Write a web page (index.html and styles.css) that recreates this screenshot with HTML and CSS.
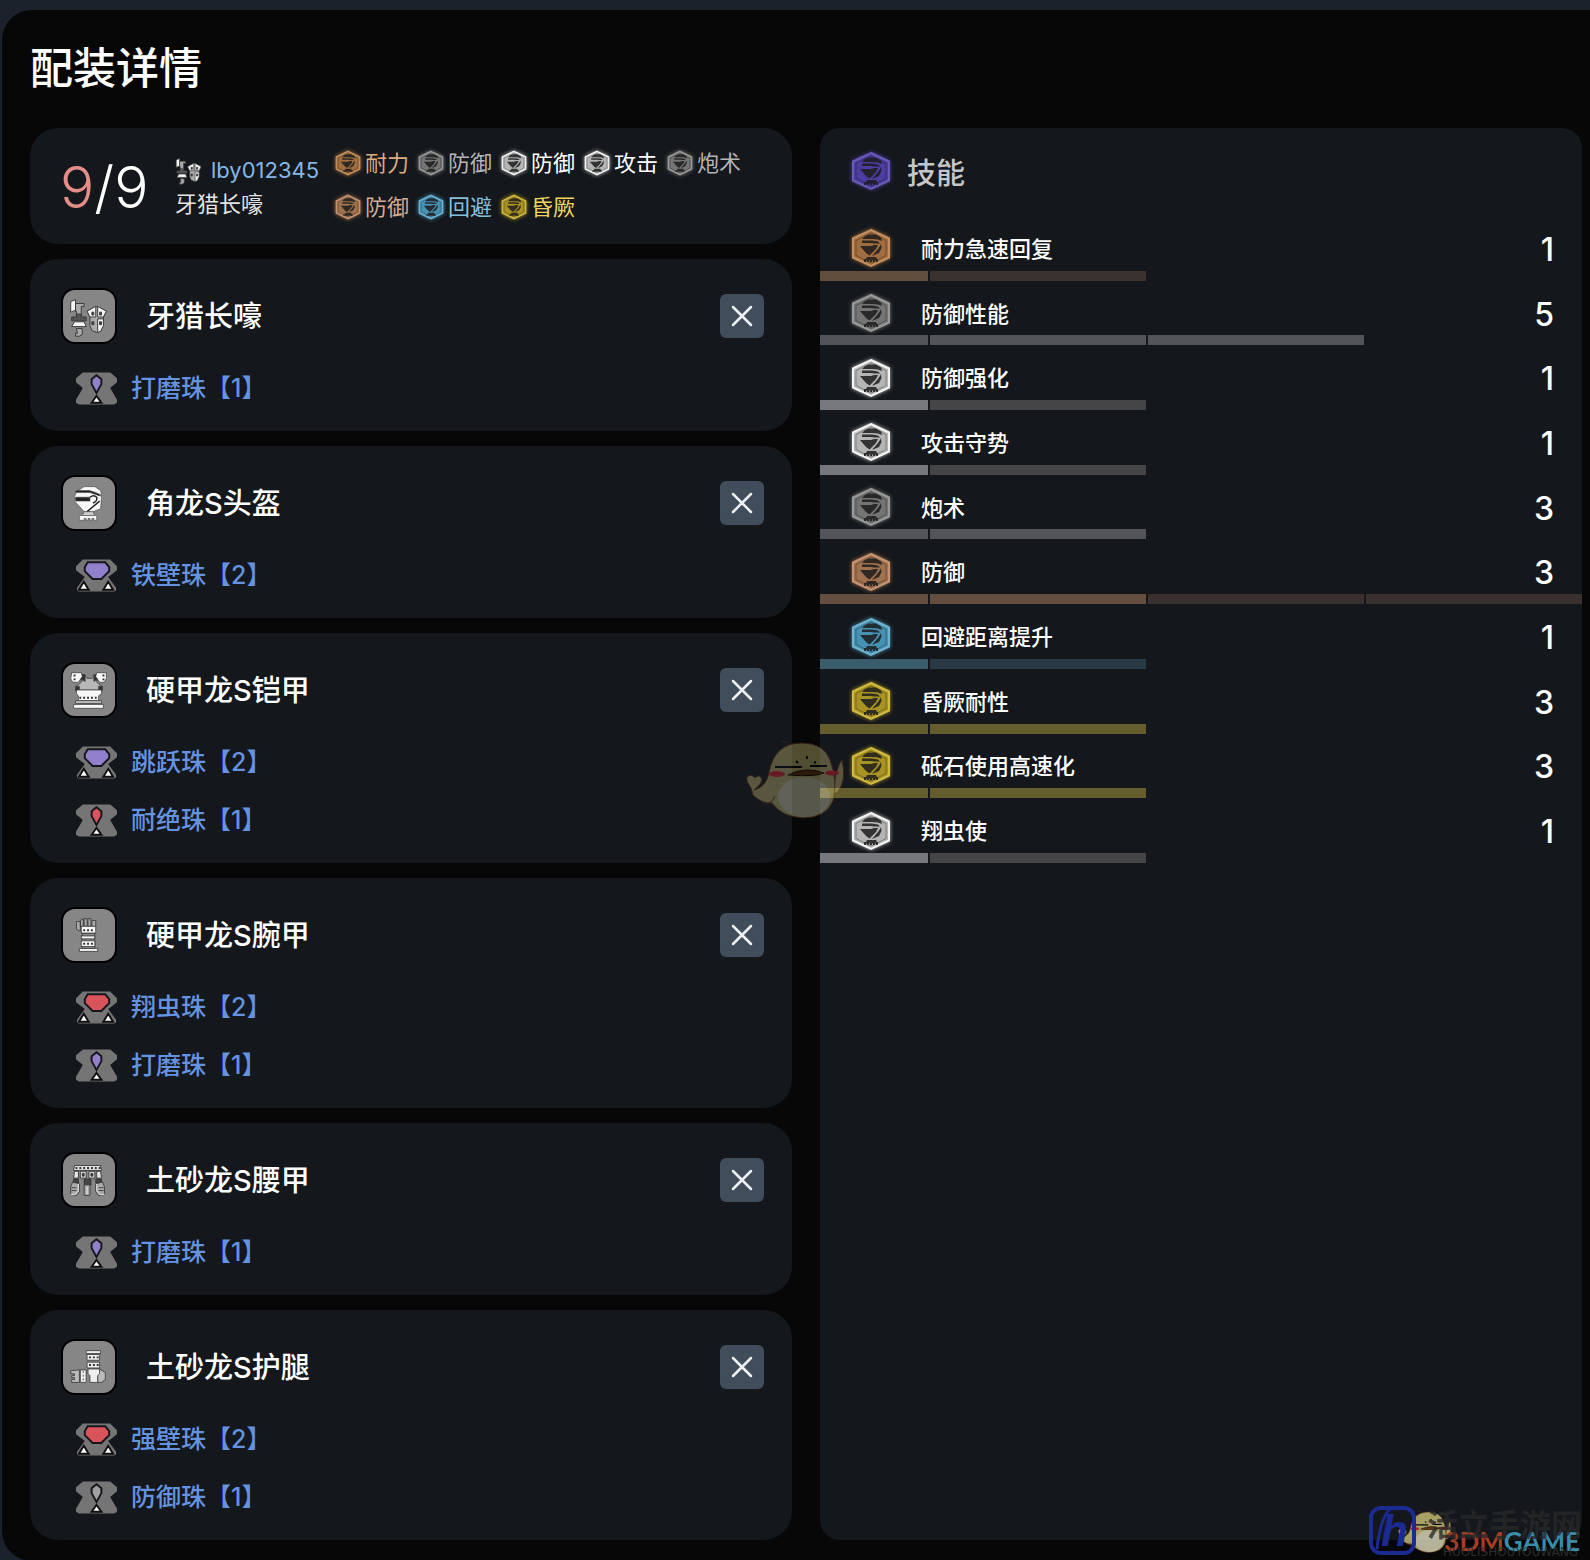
FILE: index.html
```html
<!DOCTYPE html>
<html lang="zh-CN">
<head>
  <meta charset="UTF-8">
  <meta name="viewport" content="width=device-width, initial-scale=1.0">
  <title>配装详情</title>
  <link rel="stylesheet" href="styles.css">
</head>
<body>

  <!-- Shared icons -->
  <svg class="sprite" aria-hidden="true">
    <symbol id="skill" viewBox="0 0 40 40">
      <polygon class="hex" points="20,2 38,10.500 38,29.500 20,38 2,29.500 2,10.500" />
      <polygon class="hex-line" points="20,5 35,12.500 35,27.500 20,35 5,27.500 5,12.500" />
      <g class="hex-art">
        <path d="M11 11L14 8L18 6.500H25L30 9.500L31 13L27 11.500L21 11Z" />
        <path d="M11 12.500H21L27 13.500L29 15.500H23L20 15H11Z" />
        <path d="M9 18H20L23 17H27L25 21L18.500 27.500L15 25Z" />
        <path d="M30 16L30.500 20L28 25L21 28L27 21L29 18Z" />
        <path d="M16 29H25L26 31H27V34H25V32.500H24V34H22V32.500H21V34H19V32.500H18V34H16V32.500H15V34H13V31H15Z" />
      </g>
    </symbol>
    <symbol id="weapon" viewBox="0 0 54 54">
      <g stroke="#3a3a3a" stroke-width="1">
        <path fill="#f4f4f4" d="M8 12L13 10V21L8 23Z" />
        <path fill="#aaa" d="M13 14H22V17H19V27H14V22H13Z" />
        <path fill="#555" d="M9 28H14V25H19V28H24V32H9Z" />
        <path fill="#f4f4f4" d="M12 33H22L24 38H9Z" />
        <path fill="#aaa" d="M14 40H20V46L17 48H13V45H15Z" />
        <path fill="#aaa" d="M25 22L35 17L45 22L42 28V37L39 43L35 44L30 42L28 37V28Z" />
        <path fill="#f4f4f4" d="M25 22L34 17V28H28ZM36 17L45 22L42 28H36ZM36 30H42V37L39 43L36 44Z" />
        <path fill="#444" d="M30 23H32V26H30ZM38 23H40V26H38ZM30 33H32V36H30ZM38 33H40V36H38Z" />
      </g>
    </symbol>
    <symbol id="head" viewBox="0 0 54 54">
      <g fill="#f8f8f8" stroke="#444" stroke-width=".6">
        <path d="M14 15L22 10H33L39 14L40 19L34 16L27 14H14Z" />
        <path d="M12 20L14 16H27L34 18L40 20L39 33L31 36L26 36H22L12 25Z" />
        <path fill="#222" d="M13 21H28V25H13Z" />
        <path fill="none" stroke="#222" stroke-width="1.500" d="M28 21Q32 18 35 21Q36 25 31 27M38 25L25 36M13 15H28L38 19" />
        <path fill="#ccc" d="M22 36H31L33 40H20Z" />
        <path d="M17 40H35V45H32V43H30V45H28V43H26V45H24V43H22V45H17Z" />
      </g>
    </symbol>
    <symbol id="chest" viewBox="0 0 54 54">
      <g fill="#f8f8f8" stroke="#444" stroke-width=".8">
        <path fill="#b8b8b8" d="M19 13H23L25 15H30L32 13H36L35 19L40 23V27H14V23L19 19Z" />
        <path fill="#333" d="M18 11H23V18L18 16ZM32 11H37V16L32 18ZM13 23H17V28H13ZM37 23H41V28H37Z" />
        <path d="M9 9H19L20 13L16 19H10L8 15ZM35 9H45V15L43 19H38L34 13Z" />
        <path fill="#333" stroke="none" d="M11 11H13V13H11ZM11 15H13V17H11ZM41 11H43V13H41ZM41 15H43V17H41Z" />
        <path d="M14 27H40V31L37 33V38H16V33L14 31Z" />
        <path stroke="#333" stroke-width="2" stroke-dasharray="2 2" d="M17 35H37" />
        <path fill="#bbb" d="M13 38H40V41H13Z" />
        <path d="M11 42H42V46H11Z" />
      </g>
    </symbol>
    <symbol id="arm" viewBox="0 0 54 54">
      <g fill="#f8f8f8" stroke="#333" stroke-width=".8">
        <path fill="#aaa" d="M14 13H18V23L14 21ZM18 12L21 10V18H18ZM22 10H25V18H22ZM26 10H29V18H26ZM30 12H34V18H30Z" />
        <path fill="#888" d="M20 25H33V41H20Z" />
        <path d="M19 18H34V25H19ZM19 28H33V31H19ZM19 33H33V39H19ZM17 41H36V44H17Z" />
        <path stroke="#333" stroke-width="2" stroke-dasharray="2 2" d="M21 22H33M21 36H32" />
      </g>
    </symbol>
    <symbol id="waist" viewBox="0 0 54 54">
      <g fill="#e8e8e8" stroke="#333" stroke-width=".9">
        <path d="M12 12H39L40 17H11ZM12 18H16V25H11ZM18 18H24V25H18ZM27 18H33V25H27ZM35 18H39L40 25H35Z" />
        <path stroke-width="2" stroke-dasharray="2 2" d="M13 14.500H39" />
        <path fill="#444" d="M20 20H22V23H20ZM29 20H31V23H29ZM11 26H16V30H11ZM22 26H29V32H22ZM34 26H40V30H34Z" />
        <path fill="#aaa" d="M10 29L17 31V39L14 43L8 42V34ZM22 32H28V43H22ZM34 31L41 29L43 34V42L37 43L34 39Z" />
        <path fill="none" stroke="#f0f0f0" d="M16 31V38L13 42H8M25 34V42M35 31V38L38 42H43" />
        <path fill="none" d="M9 35H14M9 38H14M37 35H42M37 38H42" />
      </g>
    </symbol>
    <symbol id="leg" viewBox="0 0 54 54">
      <g fill="#eee" stroke="#333" stroke-width=".8">
        <path d="M24 10H39V13H24ZM25 14H38V20H25ZM25 22H38V28H25Z" />
        <path stroke-width="2" stroke-dasharray="2 2" d="M27 17H37M27 25H37" />
        <path fill="#bbb" d="M8 31L17 30V43H9V40H12V38H9V36H12V34H8ZM38 29L44 33V40L40 43H36V36Z" />
        <path d="M18 30H24V43H18ZM26 29H38V34L36 36V43H28V36L26 34Z" />
        <path fill="none" stroke-dasharray="2 2" d="M21 31V43" />
      </g>
    </symbol>
    <symbol id="slot1" viewBox="0 0 42 34">
      <path fill="#757575" d="M7 0H35L42 6V10L35 16L42 28V31L39 33H3L0 31V28L7 16L0 10V6Z" />
      <path class="gem" d="M21 3L16 7V12L21 21L26 12V7Z" />
      <path class="slot-mark" d="M21 24L26 31H16Z" />
    </symbol>
    <symbol id="slot2" viewBox="0 0 42 34">
      <path fill="#757575" d="M7 0H35L42 7V11L33 18L41 29V32L39 33H3L1 32V29L9 18L0 11V7Z" />
      <path class="gem" d="M12 3H30L34 8V12L26 20H17L9 12V8Z" />
      <path class="slot-mark" d="M8 23L13 31H3ZM33 23L38 31H28Z" />
    </symbol>
    <symbol id="close" viewBox="0 0 24 24">
      <path d="M3 3L21 21M21 3L3 21" fill="none" stroke="#eef1f5" stroke-width="2.500" stroke-linecap="round" />
    </symbol>
    <symbol id="bird" viewBox="0 0 100 82">
      <g fill="#d8cf7e" stroke="#7a3a1c" stroke-width="1">
        <path d="M87 52Q90 26 96 19Q101 40 91 52Z" />
        <path d="M56 2Q78 2 84 19Q92 40 87 60Q80 77 57 77Q36 76 26 62Q16 63 7 54L5 47Q0 40 1 36Q5 32 9 37Q14 32 16 39Q15 44 8 49Q20 46 23 32Q28 2 56 2Z" />
        <path fill="none" d="M42 2L36 0M8 49L13 44M16 62Q26 64 29 55" />
      </g>
      <ellipse cx="58" cy="56" rx="26" ry="20" fill="#fff" opacity=".6" />
      <ellipse cx="31" cy="33" rx="8" ry="3" fill="#ff2035" />
      <ellipse cx="86" cy="32" rx="7" ry="2.500" fill="#ff2035" />
      <path fill="#7a3c10" stroke="#1a0a00" d="M42 34Q60 25 78 32Q70 36 42 34Z" />
      <path stroke="#000" stroke-width="2" d="M29 26H56M64 25H81" />
      <path stroke="#000" stroke-width="2" d="M50 20L52 22M61 15V18M70 21L68 22" />
    </symbol>
  </svg>

  <main class="modal">
    <h1 class="title">配装详情</h1>

    <div class="columns">
      <!-- Equipment -->
      <section class="equipment">
        <div class="card summary">
          <div class="score"><span>9</span>/9</div>
          <div class="player">
            <div class="player-name"><svg class="icon-player"><use href="#weapon" /></svg><a href="#">lby012345</a></div>
            <p>牙猎长嚎</p>
          </div>
          <ul class="tags">
            <li class="orange"><svg><use href="#skill" /></svg>耐力</li>
            <li class="gray"><svg><use href="#skill" /></svg>防御</li>
            <li class="white"><svg><use href="#skill" /></svg>防御</li>
            <li class="white"><svg><use href="#skill" /></svg>攻击</li>
            <li class="gray"><svg><use href="#skill" /></svg>炮术</li>
            <li class="brown"><svg><use href="#skill" /></svg>防御</li>
            <li class="blue"><svg><use href="#skill" /></svg>回避</li>
            <li class="yellow"><svg><use href="#skill" /></svg>昏厥</li>
          </ul>
        </div>

        <article class="card item">
          <div class="item-head">
            <svg class="icon-item"><use href="#weapon" /></svg>
            <h2>牙猎长嚎</h2>
            <button class="btn-close" type="button" aria-label="移除"><svg><use href="#close" /></svg></button>
          </div>
          <a class="jewel purple" href="#"><svg><use href="#slot1" /></svg><span>打磨珠【1】</span></a>
        </article>

        <article class="card item">
          <div class="item-head">
            <svg class="icon-item"><use href="#head" /></svg>
            <h2>角龙S头盔</h2>
            <button class="btn-close" type="button" aria-label="移除"><svg><use href="#close" /></svg></button>
          </div>
          <a class="jewel purple" href="#"><svg><use href="#slot2" /></svg><span>铁壁珠【2】</span></a>
        </article>

        <article class="card item">
          <div class="item-head">
            <svg class="icon-item"><use href="#chest" /></svg>
            <h2>硬甲龙S铠甲</h2>
            <button class="btn-close" type="button" aria-label="移除"><svg><use href="#close" /></svg></button>
          </div>
          <a class="jewel purple" href="#"><svg><use href="#slot2" /></svg><span>跳跃珠【2】</span></a>
          <a class="jewel red" href="#"><svg><use href="#slot1" /></svg><span>耐绝珠【1】</span></a>
        </article>

        <article class="card item">
          <div class="item-head">
            <svg class="icon-item"><use href="#arm" /></svg>
            <h2>硬甲龙S腕甲</h2>
            <button class="btn-close" type="button" aria-label="移除"><svg><use href="#close" /></svg></button>
          </div>
          <a class="jewel red" href="#"><svg><use href="#slot2" /></svg><span>翔虫珠【2】</span></a>
          <a class="jewel purple" href="#"><svg><use href="#slot1" /></svg><span>打磨珠【1】</span></a>
        </article>

        <article class="card item">
          <div class="item-head">
            <svg class="icon-item"><use href="#waist" /></svg>
            <h2>土砂龙S腰甲</h2>
            <button class="btn-close" type="button" aria-label="移除"><svg><use href="#close" /></svg></button>
          </div>
          <a class="jewel purple" href="#"><svg><use href="#slot1" /></svg><span>打磨珠【1】</span></a>
        </article>

        <article class="card item">
          <div class="item-head">
            <svg class="icon-item"><use href="#leg" /></svg>
            <h2>土砂龙S护腿</h2>
            <button class="btn-close" type="button" aria-label="移除"><svg><use href="#close" /></svg></button>
          </div>
          <a class="jewel red" href="#"><svg><use href="#slot2" /></svg><span>强壁珠【2】</span></a>
          <a class="jewel plain" href="#"><svg><use href="#slot1" /></svg><span>防御珠【1】</span></a>
        </article>
      </section>

      <!-- Skills -->
      <section class="skills">
        <h2 class="skills-title purple-hex"><svg><use href="#skill" /></svg>技能</h2>
        <ul class="skill-list">
          <li class="skill orange">
            <div class="skill-row"><svg><use href="#skill" /></svg><span>耐力急速回复</span><b>1</b></div>
            <div class="bar"><i class="on"></i><i></i></div>
          </li>
          <li class="skill gray">
            <div class="skill-row"><svg><use href="#skill" /></svg><span>防御性能</span><b>5</b></div>
            <div class="bar"><i class="on"></i><i class="on"></i><i class="on"></i></div>
          </li>
          <li class="skill white">
            <div class="skill-row"><svg><use href="#skill" /></svg><span>防御强化</span><b>1</b></div>
            <div class="bar"><i class="on"></i><i></i></div>
          </li>
          <li class="skill white">
            <div class="skill-row"><svg><use href="#skill" /></svg><span>攻击守势</span><b>1</b></div>
            <div class="bar"><i class="on"></i><i></i></div>
          </li>
          <li class="skill gray">
            <div class="skill-row"><svg><use href="#skill" /></svg><span>炮术</span><b>3</b></div>
            <div class="bar"><i class="on"></i><i class="on"></i></div>
          </li>
          <li class="skill brown">
            <div class="skill-row"><svg><use href="#skill" /></svg><span>防御</span><b>3</b></div>
            <div class="bar"><i class="on"></i><i class="on"></i><i></i><i></i></div>
          </li>
          <li class="skill blue">
            <div class="skill-row"><svg><use href="#skill" /></svg><span>回避距离提升</span><b>1</b></div>
            <div class="bar"><i class="on"></i><i></i></div>
          </li>
          <li class="skill yellow">
            <div class="skill-row"><svg><use href="#skill" /></svg><span>昏厥耐性</span><b>3</b></div>
            <div class="bar"><i class="on"></i><i class="on"></i></div>
          </li>
          <li class="skill yellow">
            <div class="skill-row"><svg><use href="#skill" /></svg><span>砥石使用高速化</span><b>3</b></div>
            <div class="bar"><i class="on"></i><i class="on"></i></div>
          </li>
          <li class="skill white">
            <div class="skill-row"><svg><use href="#skill" /></svg><span>翔虫使</span><b>1</b></div>
            <div class="bar"><i class="on"></i><i></i></div>
          </li>
        </ul>
      </section>
    </div>

    <!-- Watermarks -->
    <svg class="bird-mark"><use href="#bird" /></svg>
    <div class="site-mark">
      <svg class="site-bird"><use href="#bird" /></svg>
      <span class="site-game"><em>3DM</em>GAME</span>
      <span class="site-name">活立手游网</span>
      <span class="site-pinyin">HUOLISHOUYOUWANG</span>
      <svg class="site-logo" viewBox="0 0 50 52">
        <rect x="3" y="3" width="43" height="45" rx="10" fill="none" stroke="#1b2b92" stroke-width="4" />
        <path d="M22 4Q12 14 9 44" fill="none" stroke="#1b2b92" stroke-width="3" />
        <text x="13" y="41" class="site-letter">h</text>
      </svg>
    </div>
  </main>

</body>
</html>
```
FILE: styles.css
```css
* {
  margin: 0;
  padding: 0;
  box-sizing: border-box;
}

body {
  font-family: Inter, "Noto Sans CJK SC", sans-serif;
  background-color: #1b222b;
  color: #fff;
}

ul {
  list-style: none;
}

a {
  text-decoration: none;
}

.sprite {
  position: absolute;
  width: 0;
  height: 0;
}

.modal {
  position: relative;
  margin: 10px 0 0 2px;
  padding: 28px 8px 21px 28px;
  background-color: #070707;
  border-radius: 30px 0 0 30px;
}

.title {
  margin-bottom: 30px;
  font-size: 43px;
  font-weight: 500;
  line-height: 60px;
}

.columns {
  display: flex;
  gap: 28px;
}

/* Left column */
.equipment {
  flex: 1;
  display: flex;
  flex-direction: column;
  gap: 15px;
}

.card {
  background-color: #14171b;
  border-radius: 28px;
}

.summary {
  display: flex;
  align-items: center;
  min-height: 116px;
  padding: 0 30px;
}

.score {
  width: 115px;
  padding-top: 4px;
  font-size: 57px;
  font-weight: 300;
  line-height: 72px;
}

.score span {
  color: #e58d88;
}

.player {
  width: 160px;
  padding-top: 2px;
  font-size: 22px;
  line-height: 34px;
  color: #e4e4e4;
}

.player-name {
  display: flex;
  align-items: center;
  gap: 8px;
}

.player-name a {
  color: #84b7e8;
}

.icon-player {
  width: 28px;
  height: 28px;
  transform: scale(1.3);
}

.tags {
  flex: 1;
  display: flex;
  flex-wrap: wrap;
  column-gap: 9px;
  padding-bottom: 3px;
}

.tags li {
  display: flex;
  align-items: center;
  gap: 4px;
  font-size: 22px;
  line-height: 44px;
  color: var(--text);
}

.tags svg {
  width: 26px;
  height: 26px;
}

.item {
  display: flex;
  flex-direction: column;
  padding: 28px 28px 13px 31px;
}

.item-head {
  display: flex;
  align-items: center;
  height: 58px;
  margin-bottom: 15px;
}

.icon-item {
  width: 56px;
  height: 56px;
  border: 2px solid #000;
  border-radius: 14px;
  background-color: #868686;
}

.item h2 {
  flex: 1;
  margin-left: 29px;
  padding-bottom: 4px;
  font-size: 29px;
  font-weight: 500;
}

.btn-close {
  display: flex;
  align-items: center;
  justify-content: center;
  width: 44px;
  height: 44px;
  border: none;
  border-radius: 6px;
  background-color: #414d5b;
  cursor: pointer;
}

.btn-close svg {
  width: 24px;
  height: 24px;
}

.jewel {
  display: flex;
  align-items: center;
  gap: 14px;
  height: 58px;
  margin-left: 15px;
  font-size: 25px;
  font-weight: 500;
  color: #6593e0;
}

.jewel span {
  padding-bottom: 7px;
}

.jewel svg {
  width: 41px;
  height: 34px;
}

.gem {
  fill: var(--gem);
  stroke: #16161c;
  stroke-width: 2;
}

.slot-mark {
  fill: #fff;
  stroke: #111;
  stroke-width: 2;
}

.purple {
  --gem: #9181cc;
}

.red {
  --gem: #d9545a;
}

.plain {
  --gem: #a0a0a0;
}

/* Right column */
.skills {
  flex: 1;
  background-color: #14171b;
  border-radius: 20px;
}

.skills-title {
  display: flex;
  align-items: center;
  gap: 16px;
  height: 88px;
  padding: 0 0 3px 31px;
  font-size: 29px;
  font-weight: 500;
  color: #c6c6c6;
}

.skills-title svg,
.skill svg {
  width: 40px;
  height: 40px;
}

/* ten rows share the height evenly */
.skill-list {
  display: grid;
  grid-auto-rows: 1fr;
  min-height: 647px;
}

.skill {
  display: flex;
  flex-direction: column;
}

.skill-row {
  flex: 1;
  display: flex;
  align-items: center;
  padding: 10px 28px 0 31px;
  font-size: 22px;
  font-weight: 500;
}

.skill-row span {
  flex: 1;
  margin-left: 30px;
  padding-bottom: 3px;
}

.skill-row b {
  padding-top: 2px;
  font-size: 32px;
  font-weight: 500;
}

.bar {
  display: grid;
  grid-template-columns: 1fr 2fr 2fr 2fr;
  gap: 2px;
  height: 10px;
}

.bar i {
  background-color: var(--off);
}

.bar .on {
  background-color: var(--on);
}

/* Skill icon */
.hex {
  fill: var(--hex);
  stroke: var(--edge);
  stroke-width: 2;
}

.hex-line {
  fill: none;
  stroke: #000;
  stroke-opacity: 0.3;
  stroke-width: 1;
}

.hex-art {
  fill: #1c1c1c;
  fill-opacity: 0.85;
}

.tags svg,
.skills-title svg,
.skill svg {
  filter: drop-shadow(0 0 2px var(--hex));
}

.orange {
  --hex: #a06e40;
  --edge: #c48e5e;
  --text: #d9ac84;
  --on: #614e3d;
  --off: #3a322e;
}

.brown {
  --hex: #a0714e;
  --edge: #c49474;
  --text: #d3ab90;
  --on: #634e3f;
  --off: #3a312f;
}

.gray {
  --hex: #757575;
  --edge: #999;
  --text: #b4b4b4;
  --on: #535458;
  --off: #38393c;
}

.white {
  --hex: #b5b5b5;
  --edge: #f4f4f4;
  --text: #fff;
  --on: #77787b;
  --off: #454548;
}

.blue {
  --hex: #4791b3;
  --edge: #72b4d0;
  --text: #85c0da;
  --on: #395b6c;
  --off: #283945;
}

.yellow {
  --hex: #a89324;
  --edge: #d0ba42;
  --text: #f0d45c;
  --on: #655d2d;
  --off: #3a3722;
}

.purple-hex {
  --hex: #4d3da0;
  --edge: #6a5ab8;
}

.purple-hex .hex-art {
  fill: #17103c;
}

/* Watermarks */
.bird-mark {
  position: absolute;
  left: 744px;
  top: 731px;
  width: 100px;
  height: 82px;
  opacity: 0.35;
}

.site-mark {
  position: absolute;
  right: 8px;
  bottom: 0;
  width: 214px;
  height: 56px;
}

.site-mark > * {
  position: absolute;
  white-space: nowrap;
}

.site-logo {
  left: 0;
  top: 0;
  width: 50px;
  height: 52px;
}

.site-letter {
  font: italic bold 44px "Liberation Sans", sans-serif;
  fill: #1b2b92;
}

.site-bird {
  left: 30px;
  top: 4px;
  width: 54px;
  height: 48px;
  opacity: 0.75;
}

.site-game {
  right: 2px;
  top: 18px;
  font: bold 26px/36px Lato, sans-serif;
  color: #3a8cab;
}

.site-game em {
  font-style: normal;
  color: #a33f26;
}

.site-name {
  right: 0;
  top: 0;
  font: bold 31px/36px "Noto Sans CJK SC", sans-serif;
  color: rgba(40, 40, 42, 0.8);
}

.site-pinyin {
  right: 4px;
  top: 40px;
  font: 12px/14px "DejaVu Sans", sans-serif;
  color: rgba(50, 50, 52, 0.9);
}
```
